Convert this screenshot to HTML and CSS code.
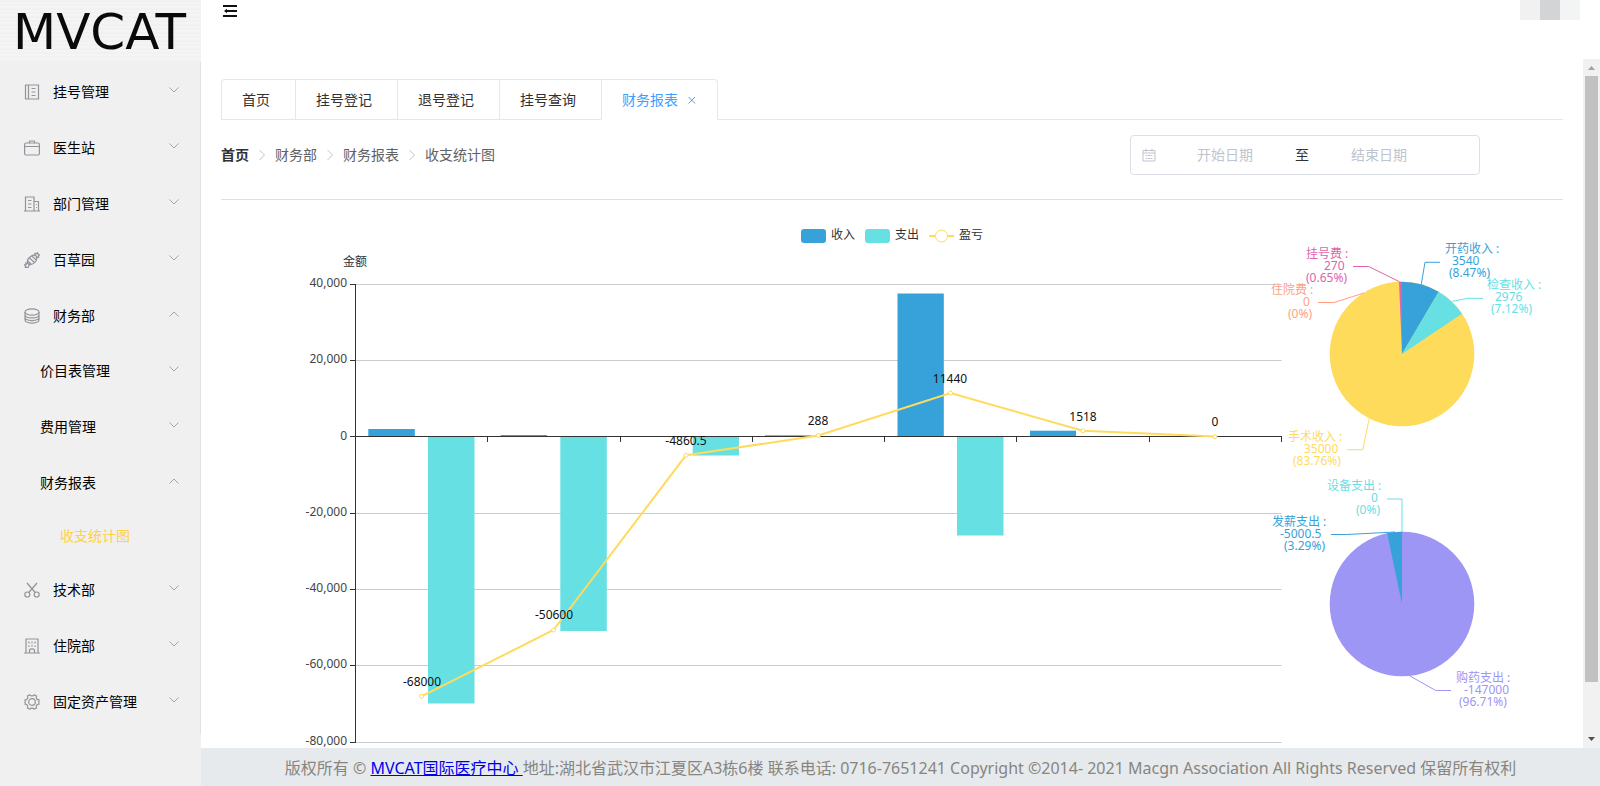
FILE: index.html
```html
<!DOCTYPE html>
<html lang="zh-CN">
<head>
<meta charset="utf-8">
<title>MVCAT 收支统计图</title>
<link rel="stylesheet" href="styles.css">
</head>
<body>
<svg class="sprite" aria-hidden="true">
  <symbol id="down" viewBox="0 0 12 12"><path d="M1.500 3.500l4.500 4.500L10.500 3.500"/></symbol>
  <symbol id="up" viewBox="0 0 12 12"><path d="M1.500 8.500L6 4l4.500 4.500"/></symbol>
  <symbol id="right" viewBox="0 0 14 14"><path d="M4.500 2l5 5-5 5"/></symbol>
</svg>
<div class="app">
  <aside class="sidebar">
    <div class="logo">MVCAT</div>
    <nav class="menu">
      <button class="row" type="button">
        <svg class="icon" viewBox="0 0 16 16"><path d="M1.500 1h13v14h-13zM4.500 1v14M7.500 4.500h4M7.500 8h4M7.500 11.500h4"/></svg>
        <span>挂号管理</span><svg class="arrow"><use href="#down"/></svg></button>
      <button class="row" type="button">
        <svg class="icon" viewBox="0 0 16 16"><rect x=".6" y="3" width="14.800" height="12" rx="1.500"/><path d="M.5 6.500h15M5 3l.7-2h4.600l.7 2"/></svg>
        <span>医生站</span><svg class="arrow"><use href="#down"/></svg></button>
      <button class="row" type="button">
        <svg class="icon" viewBox="0 0 16 16"><path d="M0 15h16M1.500 15V1h8.500v14M10 5.500h4.500V15M4 4.500h3.500M4 8h3.500M4 11.500h3.500M12 8.500h.8M12 11.500h.8"/></svg>
        <span>部门管理</span><svg class="arrow"><use href="#down"/></svg></button>
      <button class="row" type="button">
        <svg class="icon" viewBox="0 0 16 16"><path d="M4.200 11.800C2.500 9 4 6.500 6 5c2-1.700 4.500-2.200 6-1s1 4-.7 5.800c-2 2.200-4.800 3.600-7.100 2zM11.300 3.600l-.3-2.200 1.700.4L13.500.6l.6 1.700 1.400.7-1.200 1 .3 1.400-2.200-.2M4.200 11.700l-2.400-.6.4 1.500-1.700.2 1 1.200-.2 1.600 1.600-.4 1 .5.700-1.200.5-1.700M5.500 6l5 4.500M8 4.200l4.200 3.600M3.900 9l3.300 3.200"/></svg>
        <span>百草园</span><svg class="arrow"><use href="#down"/></svg></button>
      <button class="row" type="button" aria-expanded="true">
        <svg class="icon" viewBox="0 0 16 16"><ellipse cx="8" cy="4" rx="7" ry="3.200"/><path d="M1 4v7.800c0 4.300 14 4.300 14 0V4M1 6.700c0 4.300 14 4.300 14 0M1 9.300c0 4.300 14 4.300 14 0"/></svg>
        <span>财务部</span><svg class="arrow"><use href="#up"/></svg></button>
      <button class="row sub" type="button"><span>价目表管理</span><svg class="arrow"><use href="#down"/></svg></button>
      <button class="row sub" type="button"><span>费用管理</span><svg class="arrow"><use href="#down"/></svg></button>
      <button class="row sub" type="button" aria-expanded="true"><span>财务报表</span><svg class="arrow"><use href="#up"/></svg></button>
      <a class="leaf" href="#chart">收支统计图</a>
      <button class="row" type="button">
        <svg class="icon" viewBox="0 0 16 16"><circle cx="3.300" cy="12.500" r="2.500"/><circle cx="12.700" cy="12.500" r="2.500"/><path d="M3 1l8.200 9.500M13 1l-8.200 9.500"/></svg>
        <span>技术部</span><svg class="arrow"><use href="#down"/></svg></button>
      <button class="row" type="button">
        <svg class="icon" viewBox="0 0 16 16"><path d="M0 15h16M2 15V1h12v14M5 3.500v2M8 3.500v2M11 3.500v2M5 7.500v1.500M8 7v1.500M11 7.500v1.500M5.500 15v-2.500c0-2.300 5-2.300 5 0V15"/></svg>
        <span>住院部</span><svg class="arrow"><use href="#down"/></svg></button>
      <button class="row" type="button">
        <svg class="icon" viewBox="0 0 16 16"><circle cx="8" cy="8" r="3.300"/><path d="M5.800.8c1 1.500 3.400 1.500 4.400 0l2.300 1.300c-.8 1.700.3 3.700 2.400 3.800v4.200c-2.100.1-3.200 2.100-2.400 3.800l-2.300 1.300c-1-1.500-3.400-1.500-4.400 0l-2.300-1.300c.8-1.700-.3-3.700-2.400-3.800V5.900c2.100-.1 3.200-2.100 2.400-3.800z"/></svg>
        <span>固定资产管理</span><svg class="arrow"><use href="#down"/></svg></button>
    </nav>
  </aside>
  <div class="page">
    <header class="topbar">
      <button class="fold" type="button" aria-label="收起菜单">
        <svg viewBox="0 0 14 12"><path d="M0 1h14M6 6h8M0 11h14"/><path class="solid" d="M1 6l3-2.300v4.600z"/><path d="M3 6h3"/></svg>
      </button>
      <div class="user"><i></i><i></i><i></i></div>
    </header>
    <div class="body">
      <main class="content">
        <div class="tabs" role="tablist">
          <button class="tab" type="button" role="tab">首页</button>
          <button class="tab" type="button" role="tab">挂号登记</button>
          <button class="tab" type="button" role="tab">退号登记</button>
          <button class="tab" type="button" role="tab">挂号查询</button>
          <button class="tab active" type="button" role="tab" aria-selected="true">财务报表<svg class="close" viewBox="0 0 14 14"><path d="M3.500 4l6.500 6.500M10 4l-6.500 6.500"/></svg></button>
        </div>
        <div class="tools">
          <nav class="crumbs">
            <a href="#home">首页</a><svg><use href="#right"/></svg><span>财务部</span><svg><use href="#right"/></svg><span>财务报表</span><svg><use href="#right"/></svg><span>收支统计图</span>
          </nav>
          <div class="range">
            <svg viewBox="0 0 14 14"><path d="M1 2.500h12v10.500H1zM1 5h12M4 .5v3M10 .5v3M3.500 7.500h2M6 7.500h2M8.500 7.500h2M3.500 10.500h2M6 10.500h2M8.500 10.500h2"/></svg>
            <input type="text" placeholder="开始日期" aria-label="开始日期">
            <span>至</span>
            <input type="text" placeholder="结束日期" aria-label="结束日期">
          </div>
        </div>
        <svg class="chart" id="chart" viewBox="221 200 1342 548" role="img" aria-label="收支统计图">
          <g class="grid"><path d="M356 284.500h925.500M356 360.500h925.500M356 513.500h925.500M356 589.500h925.500M356 665.500h925.500M356 742.500h925.500"/></g>
          <g class="blue">
            <rect x="368.300" y="429" width="46.500" height="7.500"/><rect x="500.600" y="435" width="46.500" height="1.500"/><rect x="633" y="436" width="46.500" height="1"/><rect x="765" y="435.300" width="46.500" height="1"/><rect x="897.500" y="293.500" width="46.300" height="143"/><rect x="1030" y="430.700" width="46" height="6"/>
          </g>
          <g class="cyan">
            <rect x="428" y="436.500" width="46.500" height="267"/><rect x="560.300" y="436.500" width="46.500" height="194.500"/><rect x="692.700" y="436.500" width="46.300" height="19"/><rect x="957" y="436.500" width="46.500" height="99"/>
          </g>
          <path class="axis" d="M355.500 284v459M356 436.500h926M350 284.500h5M350 360.500h5M350 436.500h5M350 513.500h5M350 589.500h5M350 665.500h5M350 742.500h5M487.500 437v5M620.500 437v5M752.500 437v5M884.500 437v5M1016.500 437v5M1149.500 437v5M1281.500 437v5"/>
          <path class="trend" d="M421.500 696.300L553.500 630L686 455.300L818.300 435.500L950.500 393L1083 430.800L1215 436.600"/>
          <g class="dots"><circle cx="421.500" cy="696.300" r="2"/><circle cx="553.500" cy="630" r="2"/><circle cx="686" cy="455.300" r="2"/><circle cx="818.300" cy="435.500" r="2"/><circle cx="950.500" cy="393" r="2"/><circle cx="1083" cy="430.800" r="2"/><circle cx="1215" cy="436.600" r="2"/></g>
          <g class="values"><text x="422" y="686">-68000</text><text x="554" y="619">-50600</text><text x="686" y="445">-4860.5</text><text x="818" y="425">288</text><text x="950" y="383">11440</text><text x="1083" y="421">1518</text><text x="1215" y="426">0</text></g>
          <g class="ticks"><text x="347" y="287">40,000</text><text x="347" y="363">20,000</text><text x="347" y="440">0</text><text x="347" y="516">-20,000</text><text x="347" y="592">-40,000</text><text x="347" y="668">-60,000</text><text x="347" y="745">-80,000</text></g>
          <g class="legend">
            <text x="343" y="266">金额</text>
            <rect class="blue" x="801" y="229" width="25" height="14" rx="3"/><text x="831" y="239">收入</text>
            <rect class="cyan" x="865" y="229" width="25" height="14" rx="3"/><text x="895" y="239">支出</text>
            <path class="trend" d="M929 236h25"/><circle class="ring" cx="941.500" cy="236" r="6"/><text x="959" y="239">盈亏</text>
          </g>
          <g class="pie">
            <circle class="yellow" cx="1402" cy="354" r="72.300"/>
            <path class="blue" d="M1402 354V281.700A72.300 72.300 0 0 1 1438.700 291.700z"/>
            <path class="cyan" d="M1402 354L1438.700 291.700A72.300 72.300 0 0 1 1462 313.700z"/>
            <path class="pink" d="M1402 354L1399 281.800A72.300 72.300 0 0 1 1402 281.700z"/>
            <path class="lead c-blue" d="M1421.300 284L1425 262.300H1440"/>
            <path class="lead c-cyan" d="M1452.300 301.300L1468 298.300H1483"/>
            <path class="lead c-yellow" d="M1369.300 418.300L1362.700 449.700H1347"/>
            <path class="lead c-pink" d="M1399.300 281.700L1368.700 266.500H1353"/>
            <path class="lead c-salmon" d="M1364 293L1334 302.500H1318"/>
            <g class="blue"><text x="1445" y="253">开药收入 :</text><text x="1452" y="265">3540</text><text x="1449" y="277">(8.47%)</text></g>
            <g class="cyan"><text x="1487" y="289">检查收入 :</text><text x="1495" y="301">2976</text><text x="1491" y="313">(7.12%)</text></g>
            <g class="pink"><text x="1306" y="258">挂号费 :</text><text x="1324" y="270">270</text><text x="1306" y="282">(0.65%)</text></g>
            <g class="salmon"><text x="1271" y="294">住院费 :</text><text x="1303" y="306">0</text><text x="1288" y="318">(0%)</text></g>
            <g class="yellow"><text x="1288" y="441">手术收入 :</text><text x="1304" y="453">35000</text><text x="1293" y="465">(83.76%)</text></g>
          </g>
          <g class="pie">
            <circle class="purple" cx="1402" cy="604" r="72.300"/>
            <path class="blue" d="M1402 604L1387.200 533.300A72.300 72.300 0 0 1 1402 531.700z"/>
            <path class="lead c-cyan" d="M1402 532V499H1387"/>
            <path class="lead c-blue" d="M1395 532L1346.700 534.500H1331"/>
            <path class="lead c-purple" d="M1410 676L1435.700 690.500H1451"/>
            <g class="cyan"><text x="1327" y="490">设备支出 :</text><text x="1371" y="502">0</text><text x="1356" y="514">(0%)</text></g>
            <g class="blue"><text x="1272" y="526">发薪支出 :</text><text x="1280" y="538">-5000.5</text><text x="1284" y="550">(3.29%)</text></g>
            <g class="purple"><text x="1456" y="682">购药支出 :</text><text x="1464" y="694">-147000</text><text x="1459" y="706">(96.71%)</text></g>
          </g>
        </svg>
      </main>
      <div class="scrollbar" aria-hidden="true">
        <svg class="cap" viewBox="0 0 17 17"><path d="M5 11h7L8.500 7z"/></svg>
        <div class="thumb"></div>
        <div class="rest"></div>
        <svg class="cap end" viewBox="0 0 17 17"><path d="M5 6h7l-3.500 4z"/></svg>
      </div>
    </div>
    <footer class="footer">版权所有 © <a href="#mvcat">MVCAT国际医疗中心 </a>地址:湖北省武汉市江夏区A3栋6楼 联系电话: 0716-7651241 Copyright ©2014- 2021 Macgn Association All Rights Reserved 保留所有权利</footer>
  </div>
</div>
</body>
</html>
```

FILE: styles.css
```css
* { box-sizing: border-box; }

body {
  margin: 0;
  font: 14px/20px "Noto Sans", "Noto Sans CJK SC", sans-serif;
  color: #303133;
  background: #fff;
}

button, input { font: inherit; color: inherit; }
button { border: 0; background: none; padding: 0; }
a { color: inherit; text-decoration: none; }
svg { fill: none; stroke: currentColor; flex: none; }
.sprite { display: none; }

.app { display: flex; height: 100vh; overflow: hidden; }

.sidebar { flex: none; width: 201px; background: #f0f0f0; }

.logo {
  height: 62px;
  padding: 2px 0 0 13px;
  font: 50px/60px "DejaVu Sans", sans-serif;
  color: #0a0a0a;
  background: repeating-linear-gradient(#f1f1f1 0 2px, #f4f4f4 2px 4px);
}

.menu { padding: 2px 0 4px; border-right: 1px solid #e0e2e6; }

.row {
  display: flex;
  align-items: center;
  width: 100%;
  height: 56px;
  padding: 0 20px 0 24px;
  color: #000;
  text-align: left;
}
.row.sub { padding: 0 20px 2px 40px; }
.row span { flex: 1; }
.icon { width: 16px; height: 16px; margin-right: 13px; color: #909399; stroke-width: 1.2; }
.arrow { width: 12px; height: 12px; margin-bottom: 4px; color: #a2a5aa; }
.leaf { display: block; height: 50px; padding-left: 60px; line-height: 48px; color: #ffd04b; }

.page { flex: 1; min-width: 0; display: flex; flex-direction: column; }

.topbar {
  flex: none;
  display: flex;
  justify-content: space-between;
  align-items: flex-start;
  height: 59px;
  padding: 0 20px 0 22px;
}
.fold { padding-top: 5px; line-height: 0; color: #111; }
.fold svg { width: 14px; height: 12px; stroke-width: 2; }
.fold .solid { fill: currentColor; stroke: none; }
.user { display: flex; }
.user i { width: 20px; height: 20px; background: #f1f1f2; }
.user i:nth-child(2) { background: #d3d4d6; }
.user i:nth-child(3) { background: #f3f5f5; }

.body { flex: 1; min-height: 0; display: flex; }
.content { flex: 1; min-width: 0; padding: 20px 20px 0; overflow: hidden; }

.tabs { display: flex; border-bottom: 1px solid #e4e7ed; }
.tab {
  height: 41px;
  margin-bottom: -1px;
  padding: 0 25px 0 20px;
  border: 1px solid #e4e7ed;
  border-right: 0;
}
.tab:first-child { border-top-left-radius: 4px; }
.tab.active {
  display: flex;
  align-items: center;
  padding-right: 18px;
  border-right: 1px solid #e4e7ed;
  border-bottom-color: #fff;
  border-top-right-radius: 4px;
  color: #409eff;
}
.close { width: 14px; height: 14px; margin-left: 7px; }

.tools {
  display: flex;
  justify-content: space-between;
  height: 80px;
  padding: 15px 83px 0 0;
  border-bottom: 1px solid #dcdfe6;
}
.crumbs { display: flex; align-items: center; height: 40px; color: #606266; }
.crumbs a { font-weight: 700; color: #303133; }
.crumbs svg { width: 14px; height: 14px; margin: 0 6px; color: #c0c4cc; }

.range {
  display: flex;
  align-items: center;
  width: 350px;
  height: 40px;
  padding: 0 11px;
  border: 1px solid #dcdfe6;
  border-radius: 4px;
}
.range svg { width: 14px; height: 14px; margin-right: 5px; color: #c0c4cc; }
.range input { width: 128px; padding: 0; border: 0; outline: 0; text-align: center; background: none; }
.range input::placeholder { color: #c0c4cc; }
.range span { width: 26px; text-align: center; }

.chart { display: block; width: 100%; height: auto; font-size: 12px; }
.chart text { stroke: none; }
.blue { fill: #37a2da; stroke: none; }
.cyan { fill: #67e0e3; stroke: none; }
.yellow { fill: #ffdb5c; stroke: none; }
.pink { fill: #e062ae; stroke: none; }
.salmon { fill: #ff9f7f; stroke: none; }
.purple { fill: #9d96f5; stroke: none; }
.grid { stroke: #ccc; }
.axis { stroke: #333; }
.trend { stroke: #ffdb5c; stroke-width: 2; }
.dots, .ring { fill: #fff; stroke: #ffdb5c; }
.values { fill: #111; text-anchor: middle; }
.ticks { fill: #444; text-anchor: end; }
.legend text { fill: #333; }
.c-blue { stroke: #37a2da; }
.c-cyan { stroke: #67e0e3; }
.c-yellow { stroke: #ffdb5c; }
.c-pink { stroke: #e062ae; }
.c-salmon { stroke: #ff9f7f; }
.c-purple { stroke: #9d96f5; }

.scrollbar { flex: none; display: flex; flex-direction: column; width: 17px; background: #f1f1f1; }
.cap { width: 17px; height: 17px; stroke: none; fill: #a3a3a3; }
.cap.end { fill: #505050; }
.thumb { flex: 606; margin: 0 2px; background: #c1c1c1; }
.rest { flex: 49; }

.footer {
  flex: none;
  height: 38px;
  padding: 0 8px;
  font-size: 16px;
  line-height: 40px;
  text-align: center;
  white-space: nowrap;
  color: #888580;
  background: #e6eaed;
}
.footer a { color: #0000ee; text-decoration: underline; }
```
